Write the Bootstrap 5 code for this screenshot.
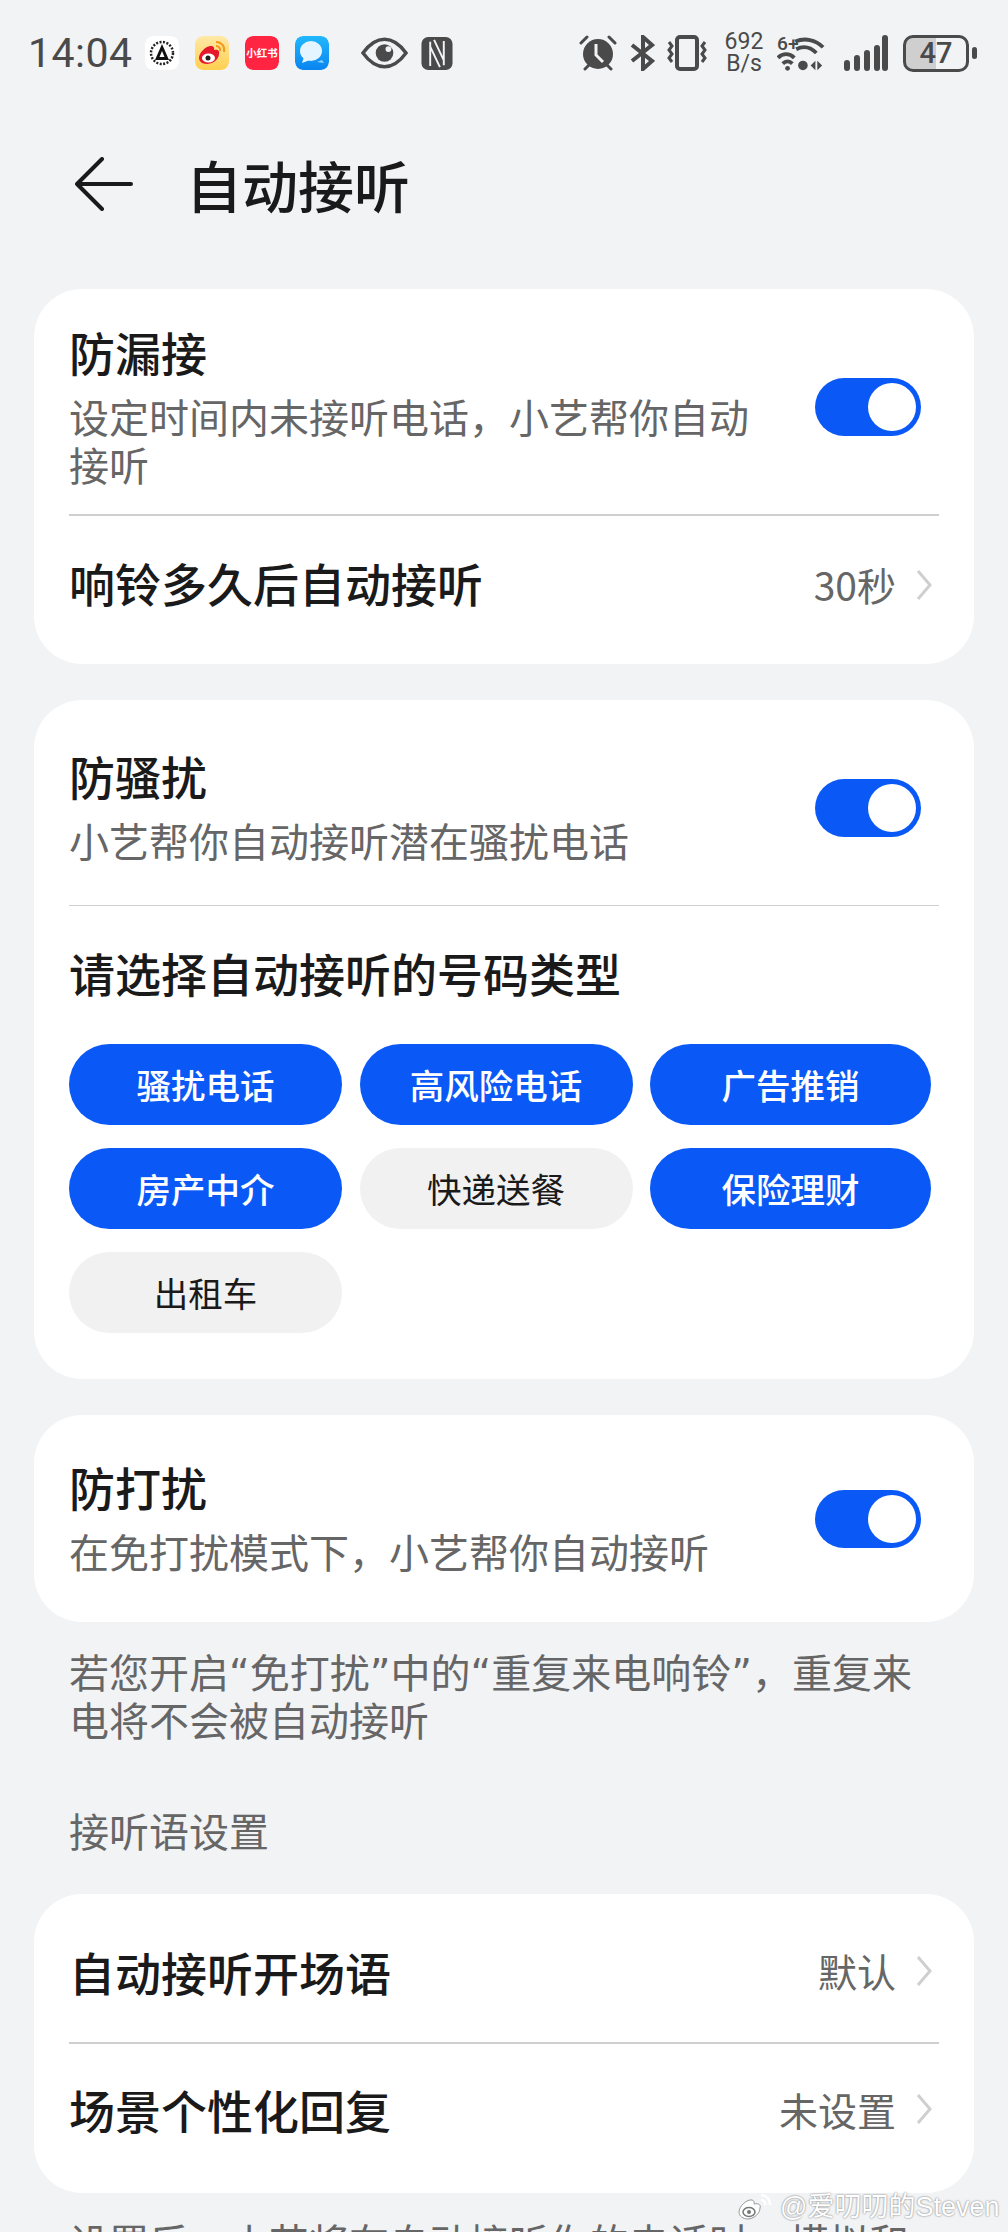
<!DOCTYPE html>
<html lang="zh-CN">
<head>
  <meta charset="UTF-8" />
  <title>自动接听</title>
  <link href="https://cdn.jsdelivr.net/npm/bootstrap@5.3.3/dist/css/bootstrap.min.css" rel="stylesheet">
  <style>
    html, body { height: 2232px; overflow: hidden; }
    body {
      background: #f1f3f5;
      color: #1a1a1a;
      font-family: "Noto Sans CJK SC", "Noto Sans", sans-serif;
    }
    .status-bar { height: 106px; padding: 0 31px 0 28px; color: #4a4a4a; }
    .status-time { font-family: Roboto, sans-serif; font-size: 41px; width: 117px; letter-spacing: .5px; line-height: 1; }
    .app-ico { width: 34px; height: 34px; border-radius: 8px; margin-right: 16px; display: block; flex: none; }
    .speed { font-family: Roboto, sans-serif; font-size: 23px; line-height: 22px; text-align: center; width: 40px; white-space: nowrap; }
    .batt {
      width: 66px; height: 37px; border: 3px solid #4a4a4a; border-radius: 10px;
      font-family: Roboto, sans-serif; font-size: 29px; font-weight: 500; line-height: 31px; text-align: center;
      background: linear-gradient(90deg, #cfcfcf 50%, transparent 50%);
    }
    .batt-tip { width: 5px; height: 12px; background: #4a4a4a; border-radius: 3px; margin-left: 3px; }
    .sb-11 { margin-left: 11px; }
    .sb-12 { margin-left: 12px; }
    .sb-13 { margin-left: 13px; }
    .sb-15 { margin-left: 15px; }
    .sb-19 { margin-left: 19px; }
    .top-head { height: 156px; padding-left: 75px; }
    .top-head h1 { font-size: 56px; font-weight: 500; margin: 0 0 0 53px; line-height: 1; }
    .panel { background: #fff; border-radius: 48px; margin: 0 34px 36px; padding: 0 35px; }
    .panel-first { margin-top: 27px; }
    .ttl { font-size: 46px; font-weight: 500; line-height: 56px; }
    .ttl-up { margin-bottom: 6px; }
    .sub { font-size: 40px; line-height: 48px; color: #666; }
    .ttl + .sub { margin-top: 13px; }
    .row-text { width: 705px; align-self: flex-start; }
    .toggle-on { width: 106px; height: 58px; border-radius: 29px; background: #0a59f7; position: relative; flex: none; margin-right: 18px; }
    .toggle-on::after { content: ""; position: absolute; right: 5px; top: 5px; width: 48px; height: 48px; border-radius: 50%; background: #fff; }
    .hr-line { height: 1.5px; background: #cfcfd1; }
    .val { font-size: 39px; color: #666; line-height: 1; }
    .chev { margin: 0 7px 0 20px; display: block; }
    .pick-grid { display: grid; grid-template-columns: 273px 273px 281px; column-gap: 17.5px; row-gap: 23px; }
    .pick { height: 81px; border-radius: 41px; font-size: 34.5px; display: flex; align-items: center; justify-content: center; background: #f1f1f1; color: #1a1a1a; }
    .pick.on { background: #0a59f7; color: #fff; font-weight: 500; }
    .note { font-family: "DejaVu Sans", "Noto Sans CJK SC", sans-serif; font-size: 40px; line-height: 48px; color: #666; padding: 0 68px 0 69px; }
    .wm { position: absolute; left: 737px; top: 2190px; color: #fff; font-size: 27px; line-height: 34px; text-shadow: 0 0 2px rgba(0,0,0,.6); font-family: "Liberation Sans", "Noto Sans CJK SC", sans-serif; white-space: nowrap; }
    .wm svg { margin-right: 5px; }
  </style>
</head>
<body>

<!-- status bar -->
<div class="status-bar d-flex align-items-center">
  <div class="status-time">14:04</div>
  <svg class="app-ico" viewBox="0 0 34 34"><rect width="34" height="34" rx="8" fill="#fff"/><circle cx="17" cy="17" r="11" fill="none" stroke="#222" stroke-width="2.500" stroke-dasharray="2 1.500"/><path d="M17 8l7 16H10z" fill="#111"/><path d="M17 15l2.500 6h-5z" fill="#fff"/></svg>
  <svg class="app-ico" viewBox="0 0 34 34"><defs><linearGradient id="wbg" x1="0" y1="0" x2="0" y2="1"><stop offset="0" stop-color="#ffe9a8"/><stop offset="1" stop-color="#ffcf4d"/></linearGradient></defs><rect width="34" height="34" rx="8" fill="url(#wbg)"/><path d="M4 22c0-6 8-13 13-12 3 1 2 3 2 4 4-1 6 1 5 4 0 6-7 10-12 10-5 0-8-3-8-6z" fill="#e6162d"/><ellipse cx="13.500" cy="22" rx="6.500" ry="4.500" fill="#fff"/><circle cx="13" cy="22" r="2.500" fill="#222"/><path d="M21 6a8 8 0 0 1 8 10M21 10a4 4 0 0 1 4 5" fill="none" stroke="#f39a1d" stroke-width="2"/></svg>
  <svg class="app-ico" viewBox="0 0 34 34"><rect width="34" height="34" rx="8" fill="#ff2442"/><text x="17" y="21" font-size="10.500" font-weight="700" fill="#fff" text-anchor="middle" font-family="Noto Sans CJK SC">小红书</text></svg>
  <svg class="app-ico" viewBox="0 0 34 34"><defs><linearGradient id="msg" x1="0" y1="0" x2="0" y2="1"><stop offset="0" stop-color="#22b8fb"/><stop offset="1" stop-color="#0a84f0"/></linearGradient></defs><rect width="34" height="34" rx="8" fill="url(#msg)"/><path d="M27 24l2 3-7-1z" fill="#8fd4fb"/><ellipse cx="16" cy="15" rx="11" ry="10" fill="#e4f5ff"/><path d="M9 21l-2 6 8-3z" fill="#e4f5ff"/></svg>
  <svg class="ms-3" width="47" height="32" viewBox="0 0 48 32"><path d="M2 16C10 5 17 2 24 2s14 3 22 14c-8 11-15 14-22 14S10 27 2 16z" fill="none" stroke="#4a4a4a" stroke-width="3.500"/><circle cx="24" cy="16" r="9" fill="#4a4a4a"/><circle cx="28" cy="12" r="3" fill="#f1f3f5"/></svg>
  <svg class="sb-13" width="32" height="33" viewBox="0 0 32 34"><rect width="32" height="34" rx="7" fill="#4a4a4a"/><path d="M9 5v25M23 4v25M13 3l10 21M9 10l10 21" fill="none" stroke="#f1f3f5" stroke-width="2"/></svg>

  <svg class="ms-auto" width="38" height="36" viewBox="0 0 38 36"><circle cx="19" cy="19" r="15" fill="#4a4a4a"/><path d="M17 9v11l7 7" fill="none" stroke="#f1f3f5" stroke-width="3"/><path d="M2 8l6-6M36 8l-6-6M6 34l4-4M32 34l-4-4" stroke="#4a4a4a" stroke-width="3" stroke-linecap="round"/></svg>
  <svg class="sb-12" width="26" height="36" viewBox="0 0 26 36"><path d="M3 10l20 16-9 8V2l9 8L3 26" fill="none" stroke="#4a4a4a" stroke-width="4"/></svg>
  <svg class="sb-11" width="42" height="36" viewBox="0 0 42 36"><rect x="11" y="2" width="20" height="32" rx="3" fill="none" stroke="#4a4a4a" stroke-width="4"/><path d="M3 7l3 4-3 4 3 4-3 4 3 4M39 7l-3 4 3 4-3 4 3 4-3 4" fill="none" stroke="#4a4a4a" stroke-width="3"/></svg>
  <div class="speed ms-3">692<br>B/s</div>
  <svg class="sb-13" width="48" height="38" viewBox="0 0 50 38"><text x="0" y="16" font-size="20" font-family="Roboto" font-weight="500" fill="#4a4a4a">6+</text><path d="M19 7c10-4 21-2 29 6M20 15c8-4 15-2 21 4M1 24c5-5 12-5 17 0M6 30c3-3 7-3 10 0" fill="none" stroke="#4a4a4a" stroke-width="4"/><circle cx="11" cy="35" r="2.500" fill="#4a4a4a"/><circle cx="27" cy="32" r="5" fill="#4a4a4a"/><path d="M40 27v10l-5-5zM42 27v10l5-5z" fill="#4a4a4a"/></svg>
  <svg class="sb-19" width="44" height="36" viewBox="0 0 44 36"><g stroke="#4a4a4a" stroke-width="6" stroke-linecap="round"><path d="M3 33v-5M13 33v-10M23 33v-15M33 33v-20M41 33V3"/></g></svg>
  <div class="batt sb-15">47</div>
  <div class="batt-tip"></div>
</div>

<!-- header -->
<div class="top-head d-flex align-items-center">
  <svg width="58" height="54" viewBox="0 0 58 54"><path d="M2 27h54M27 2L2 27l25 25" fill="none" stroke="#1a1a1a" stroke-width="4" stroke-linecap="round" stroke-linejoin="round"/></svg>
  <h1>自动接听</h1>
</div>

<div class="panel panel-first">
  <div class="d-flex align-items-center justify-content-between" style="height:225px;padding-top:34px">
    <div class="row-text">
      <div class="ttl">防漏接</div>
      <div class="sub">设定时间内未接听电话，小艺帮你自动接听</div>
    </div>
    <div class="toggle-on" style="margin-top:-23px"></div>
  </div>
  <div class="hr-line"></div>
  <div class="d-flex align-items-center justify-content-between" style="height:148px;padding-bottom:10px">
    <div class="ttl ttl-up">响铃多久后自动接听</div>
    <div class="d-flex align-items-center">
      <span class="val">30秒</span>
      <svg class="chev" width="16" height="30" viewBox="0 0 16 30"><path d="M2 1l12 14L2 29" fill="none" stroke="#cfcfcf" stroke-width="3"/></svg>
    </div>
  </div>
</div>

<div class="panel">
  <div class="d-flex align-items-center justify-content-between" style="height:205px;padding-top:47px">
    <div class="row-text">
      <div class="ttl">防骚扰</div>
      <div class="sub">小艺帮你自动接听潜在骚扰电话</div>
    </div>
    <div class="toggle-on" style="margin-top:-36px"></div>
  </div>
  <div class="hr-line"></div>
  <div class="ttl d-flex align-items-center" style="height:138px;padding-bottom:6px">请选择自动接听的号码类型</div>
  <div class="pick-grid" style="padding-bottom:46px">
    <div class="pick on">骚扰电话</div>
    <div class="pick on">高风险电话</div>
    <div class="pick on">广告推销</div>
    <div class="pick on">房产中介</div>
    <div class="pick">快递送餐</div>
    <div class="pick on">保险理财</div>
    <div class="pick">出租车</div>
  </div>
</div>

<div class="panel mb-0">
  <div class="d-flex align-items-center justify-content-between" style="height:207px;padding-top:43px">
    <div class="row-text">
      <div class="ttl">防打扰</div>
      <div class="sub">在免打扰模式下，小艺帮你自动接听</div>
    </div>
    <div class="toggle-on" style="margin-top:-43px"></div>
  </div>
</div>

<div class="note" style="margin-top:28px">若您开启“免打扰”中的“重复来电响铃”，重复来电将不会被自动接听</div>

<div class="sub" style="padding:60px 69px 0;height:148px">接听语设置</div>

<div class="panel mb-0">
  <div class="d-flex align-items-center justify-content-between" style="height:148px;padding-top:5px">
    <div class="ttl">自动接听开场语</div>
    <div class="d-flex align-items-center">
      <span class="val">默认</span>
      <svg class="chev" width="16" height="30" viewBox="0 0 16 30"><path d="M2 1l12 14L2 29" fill="none" stroke="#cfcfcf" stroke-width="3"/></svg>
    </div>
  </div>
  <div class="hr-line"></div>
  <div class="d-flex align-items-center justify-content-between" style="height:149px;padding-bottom:18px">
    <div class="ttl">场景个性化回复</div>
    <div class="d-flex align-items-center">
      <span class="val">未设置</span>
      <svg class="chev" width="16" height="30" viewBox="0 0 16 30"><path d="M2 1l12 14L2 29" fill="none" stroke="#cfcfcf" stroke-width="3"/></svg>
    </div>
  </div>
</div>

<div class="note" style="margin-top:27px">设置后，小艺将在自动接听你的电话时，模拟和</div>

<div class="wm d-flex align-items-center">
  <svg width="38" height="30" viewBox="0 0 38 30"><path d="M2 20c0-6 8-13 13-12 3 1 2 3 2 4 5-1 7 1 6 4 0 6-7 11-12 11-5 0-9-3-9-7z" fill="rgba(255,255,255,.85)" stroke="#999" stroke-width="1"/><ellipse cx="12" cy="20" rx="6" ry="4.500" fill="none" stroke="#777" stroke-width="1.500"/><circle cx="12" cy="20" r="2" fill="#777"/><path d="M24 3a9 9 0 0 1 9 10M24 8a4 4 0 0 1 4 5" fill="none" stroke="#fff" stroke-width="2.500"/></svg>
  <span>@爱叨叨的Steven</span>
</div>

<script src="https://cdn.jsdelivr.net/npm/bootstrap@5.3.3/dist/js/bootstrap.bundle.min.js"></script>
</body>
</html>
